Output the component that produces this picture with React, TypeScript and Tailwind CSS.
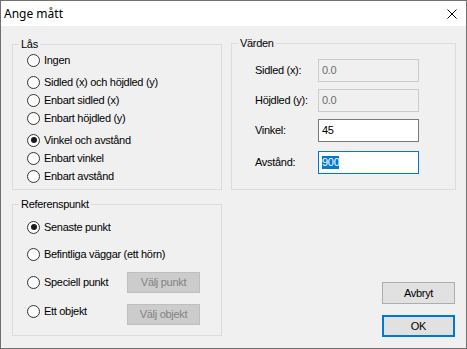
import React from "react";

const Radio = ({ checked, label }: { checked?: boolean; label: string }) => (
  <div className="flex items-center h-[18px]">
    <span className="w-[13px] h-[13px] rounded-full border border-[#333333] bg-white flex items-center justify-center shrink-0">
      {checked && <span className="w-[6px] h-[6px] rounded-full bg-[#1a1a1a]" />}
    </span>
    <span className="ml-[4px] whitespace-nowrap">{label}</span>
  </div>
);

const Group = ({
  title,
  className,
  children
}: {
  title: string;
  className: string;
  children: React.ReactNode;
}) => (
  <div className={`relative border border-[#dcdcdc] ${className}`}>
    <span className="absolute -top-[7px] left-[6px] px-[2px] bg-[#f0f0f0] leading-[13px]">{title}</span>
    {children}
  </div>
);

const Field = ({
  label,
  value,
  disabled,
  focused,
  className
}: {
  label: string;
  value: string;
  disabled?: boolean;
  focused?: boolean;
  className?: string;
}) => (
  <div className={`flex items-center h-[23px] ${className ?? ""}`}>
    <span className="w-[63px] whitespace-nowrap">{label}</span>
    <div
      className={`w-[101px] h-[23px] border flex items-center pl-[3px] ${
        disabled
          ? "bg-[#f0f0f0] border-[#cccccc] text-[#6d6d6d]"
          : focused
            ? "bg-white border-[#0078d7] text-black"
            : "bg-white border-[#7a7a7a] text-black"
      }`}
    >
      {focused ? <span className="bg-[#0078d7] text-white leading-[13px]">{value}</span> : value}
    </div>
  </div>
);

export default function App() {
  return (
    <div
      className="w-[467px] h-[349px] border border-[#707070] bg-[#f0f0f0] flex flex-col text-[11px] tracking-[-0.3px] text-black"
      style={{ fontFamily: '"Liberation Sans", Arial, sans-serif' }}
    >
      <div className="h-[25px] bg-white flex items-center justify-between pl-[3px] pr-[9px] shrink-0 tracking-normal">
        <span className="text-[12px]" style={{ fontFamily: '"Noto Sans", sans-serif' }}>
          Ange mått
        </span>
        <svg width="10" height="10" viewBox="0 0 10 10">
          <path d="M0.5 0.5 L9.5 9.5 M9.5 0.5 L0.5 9.5" stroke="#000" strokeWidth="1" />
        </svg>
      </div>
      <div className="flex pt-[17px] pl-[11px] gap-[9px]">
        <div className="w-[210px] flex flex-col gap-[14px]">
          <Group title="Lås" className="mt-[1px] h-[146px] pt-[6px] pl-[14px]">
            <Radio label="Ingen" />
            <div className="mt-[4px]">
              <Radio label="Sidled (x) och höjdled (y)" />
            </div>
            <Radio label="Enbart sidled (x)" />
            <Radio label="Enbart höjdled (y)" />
            <div className="mt-[4px]">
              <Radio checked label="Vinkel och avstånd" />
            </div>
            <Radio label="Enbart vinkel" />
            <Radio label="Enbart avstånd" />
          </Group>
          <Group title="Referenspunkt" className="h-[132px] pt-[13px] pl-[14px] flex flex-col gap-[9px]">
            <Radio checked label="Senaste punkt" />
            <Radio label="Befintliga väggar (ett hörn)" />
            <div className="flex items-center">
              <div className="w-[100px]">
                <Radio label="Speciell punkt" />
              </div>
              <div className="w-[73px] h-[21px] bg-[#cccccc] border border-[#bfbfbf] text-[#838383] flex items-center justify-center">
                Välj punkt
              </div>
            </div>
            <div className="flex items-start">
              <div className="w-[100px]">
                <Radio label="Ett objekt" />
              </div>
              <div className="mt-[2px] w-[73px] h-[21px] bg-[#cccccc] border border-[#bfbfbf] text-[#838383] flex items-center justify-center">
                Välj objekt
              </div>
            </div>
          </Group>
        </div>
        <div className="w-[225px] flex flex-col">
          <Group title="Värden" className="h-[147px] pt-[15px] pl-[23px]">
            <Field label="Sidled (x):" value="0.0" disabled />
            <Field label="Höjdled (y):" value="0.0" disabled className="mt-[7px]" />
            <Field label="Vinkel:" value="45" className="mt-[7px]" />
            <Field label="Avstånd:" value="900" focused className="mt-[9px]" />
          </Group>
          <div className="flex flex-col items-end mr-[1px] mt-[92px] gap-[11px]">
            <div className="w-[73px] h-[22px] bg-[#e1e1e1] border border-[#adadad] flex items-center justify-center">
              Avbryt
            </div>
            <div className="w-[73px] h-[22px] bg-[#e1e1e1] border-2 border-[#0078d7] flex items-center justify-center">
              OK
            </div>
          </div>
        </div>
      </div>
    </div>
  );
}
